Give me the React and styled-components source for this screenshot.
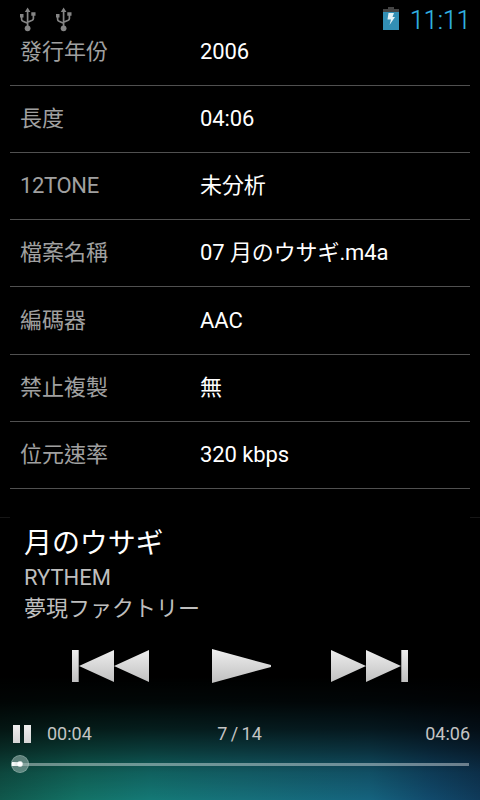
import React from 'react';
import styled, { createGlobalStyle } from 'styled-components';

const Global = createGlobalStyle`
  * { box-sizing: border-box; }
  body { margin: 0; background: #000; }
`;

const Screen = styled.div`
  width: 480px;
  height: 800px;
  overflow: hidden;
  display: flex;
  flex-direction: column;
  background: #000;
  color: #fff;
  font-family: Roboto, 'Noto Sans CJK TC', sans-serif;
`;

const StatusBar = styled.header`
  height: 38px;
  flex: none;
  display: flex;
  align-items: flex-start;
  justify-content: space-between;
  padding: 7px 10px 0 19px;
`;

const StatusGroup = styled.div`
  display: flex;
  gap: ${(p) => p.$gap}px;
`;

const Clock = styled.time`
  color: #33b5e5;
  font-size: 25px;
  line-height: 27px;
  font-weight: 300;
  -webkit-text-stroke: 0.2px #33b5e5;
  width: 60px;
  white-space: nowrap;
`;

const Details = styled.dl`
  margin: 0 10px;
  height: 479px;
  flex: none;
  display: flex;
  flex-direction: column;
  justify-content: flex-start;
`;

const Row = styled.div`
  height: ${(p) => (p.$first ? 47.85 : 67.2)}px;
  flex: none;
  display: flex;
  align-items: flex-end;
  padding: 0 10px 17px;
  border-bottom: 1px solid #505050;
  font-size: 22px;
  line-height: 32px;
  white-space: nowrap;
`;

const Label = styled.dt`
  width: 180px;
  color: #a0a0a0;
  letter-spacing: ${(p) => (p.$latin ? -0.35 : 0)}px;
`;

const Value = styled.dd`
  margin: 0;
  color: #fff;
  letter-spacing: -0.1px;
  font-family: Roboto, 'Noto Sans CJK JP', sans-serif;
`;

const Player = styled.section`
  flex: 1;
  display: flex;
  flex-direction: column;
  background:
    linear-gradient(#000 0 160px, rgba(0, 0, 0, 0.94) 185px, rgba(0, 0, 0, 0.76) 212px, rgba(0, 0, 0, 0.5) 234px, rgba(0, 0, 0, 0.2) 256px, rgba(0, 0, 0, 0) 283px),
    linear-gradient(90deg, #10584c 0, #137266 80px, #147976 150px, #16707a 240px, #15637e 370px, #114a6c 430px, #0f3a5a 480px);
`;

const Notches = styled.div`
  height: 1px;
  flex: none;
  display: flex;
  justify-content: space-between;
  &::before, &::after {
    content: '';
    width: 10px;
    background: #161616;
  }
`;

const TrackInfo = styled.div`
  height: 131px;
  padding: 6px 24px 0;
  font-family: Roboto, 'Noto Sans CJK JP', sans-serif;
  white-space: nowrap;
`;

const Title = styled.h1`
  margin: 0;
  padding-top: 1px;
  font-size: 28px;
  line-height: 38px;
  font-weight: 400;
  letter-spacing: -0.1px;
`;

const Meta = styled.div`
  font-size: 22px;
  line-height: ${(p) => p.$height || 30}px;
  color: #bebebe;
`;

const Controls = styled.div`
  height: 69px;
  display: flex;
  align-items: flex-start;
  padding: 0 72px;
  justify-content: space-between;
`;

const IconButton = styled.button`
  border: 0;
  padding: 0;
  background: none;
  display: flex;
`;

const PlayButton = styled(IconButton)`
  margin-left: 2px;
`;

const Times = styled.div`
  height: 32px;
  display: grid;
  grid-template-columns: 34px 1fr 1fr 1fr;
  align-items: center;
  padding: 0 10px 0 13px;
  font-size: 18px;
  color: #c4c4c4;
`;

const Time = styled.span`
  text-align: ${(p) => p.$align || 'left'};
  white-space: nowrap;
  line-height: 21px;
  padding-bottom: 1px;
`;

const Position = styled(Time)`
  margin-left: -38px;
  word-spacing: -1px;
`;

const SeekBar = styled.div`
  position: relative;
  width: 458px;
  height: 3px;
  margin: 13px 11px 0;
  background: rgba(255, 255, 255, 0.4);
`;

const Thumb = styled.div`
  position: absolute;
  left: 0;
  top: -8px;
  width: 18px;
  height: 18px;
  border-radius: 50%;
  border: 1px solid rgba(190, 215, 210, 0.35);
  background:
    radial-gradient(circle, #fff 0 2px, rgba(255, 255, 255, 0) 3.5px),
    linear-gradient(90deg, #fff, rgba(255, 255, 255, 0.6)) 0 6px / 8px 4px no-repeat,
    rgba(160, 185, 180, 0.55);
`;

const Usb = () => (
  <svg width="18" height="25" viewBox="0 0 18 25" fill="none" stroke="#858585" strokeWidth="1.7">
    <path d="M8.6 4v17M2.6 9v3.2q0 1.4 1.4 2l4.6 2M14.4 8v3.5q0 1.2-1.2 1.8l-4.6 2" />
    <path d="M8.6 .5 11.4 5H5.8zM1 7h3.5v3.5H1zM12.3 5.2h4.2v3.6h-4.2z" fill="#858585" stroke="none" />
    <circle cx="8.6" cy="21.3" r="2.9" fill="#858585" stroke="none" />
  </svg>
);

const Battery = () => (
  <svg width="16" height="23" viewBox="0 0 16 23">
    <path d="M5 0h6v2h5v21H0V2h5z" fill="#444" />
    <path d="M0 5h16v18H0z" fill="#328fb5" />
    <path d="M5.5 6H11L9.5 10H12L6.5 18 8 12.5H4.5z" fill="#e4f2f6" />
  </svg>
);

const Metal = ({ id }) => (
  <defs>
    <linearGradient id={id} x1="0" y1="0" x2="0" y2="34" gradientUnits="userSpaceOnUse">
      <stop stopColor="#efefef" />
      <stop offset="1" stopColor="#bfbfbf" />
    </linearGradient>
  </defs>
);

const SkipBack = () => (
  <svg width="78" height="34" viewBox="0 0 78 34">
    <Metal id="back" />
    <path d="M0 1h6.7v32H0zM42 1v32L7 17zM77 1v32L42 17z" fill="url(#back)" />
  </svg>
);

const Play = () => (
  <svg width="60" height="36" viewBox="0 0 60 36">
    <Metal id="play" />
    <path d="M1 0 60 16v2L1 34z" fill="url(#play)" />
  </svg>
);

const SkipForward = () => (
  <svg width="78" height="34" viewBox="0 0 78 34">
    <Metal id="forward" />
    <path d="M1 1v32l35-16zM36 1v32l35-16zM71.3 1H78v32h-6.7z" fill="url(#forward)" />
  </svg>
);

const Pause = () => (
  <svg width="18" height="18" viewBox="0 0 18 18">
    <Metal id="pause" />
    <path d="M0 0h7v18H0zM11 0h7v18h-7z" fill="url(#pause)" />
  </svg>
);

const details = [
  ['發行年份', '2006'],
  ['長度', '04:06'],
  ['12TONE', '未分析'],
  ['檔案名稱', '07 月のウサギ.m4a'],
  ['編碼器', 'AAC'],
  ['禁止複製', '無'],
  ['位元速率', '320 kbps'],
];

export default function App() {
  return (
    <Screen>
      <Global />
      <StatusBar>
        <StatusGroup $gap={18}><Usb /><Usb /></StatusGroup>
        <StatusGroup $gap={11}><Battery /><Clock>11:11</Clock></StatusGroup>
      </StatusBar>
      <Details>
        {details.map(([label, value], i) => (
          <Row key={label} $first={i === 0}>
            <Label $latin={label === '12TONE'}>{label}</Label>
            <Value>{value}</Value>
          </Row>
        ))}
      </Details>
      <Player>
        <Notches />
        <TrackInfo>
          <Title>月のウサギ</Title>
          <Meta>RYTHEM</Meta>
          <Meta $height={32}>夢現ファクトリー</Meta>
        </TrackInfo>
        <Controls>
          <IconButton aria-label="Previous"><SkipBack /></IconButton>
          <PlayButton aria-label="Play"><Play /></PlayButton>
          <IconButton aria-label="Next"><SkipForward /></IconButton>
        </Controls>
        <Times>
          <Pause />
          <Time>00:04</Time>
          <Position $align="center">7 / 14</Position>
          <Time $align="right">04:06</Time>
        </Times>
        <SeekBar><Thumb /></SeekBar>
      </Player>
    </Screen>
  );
}
